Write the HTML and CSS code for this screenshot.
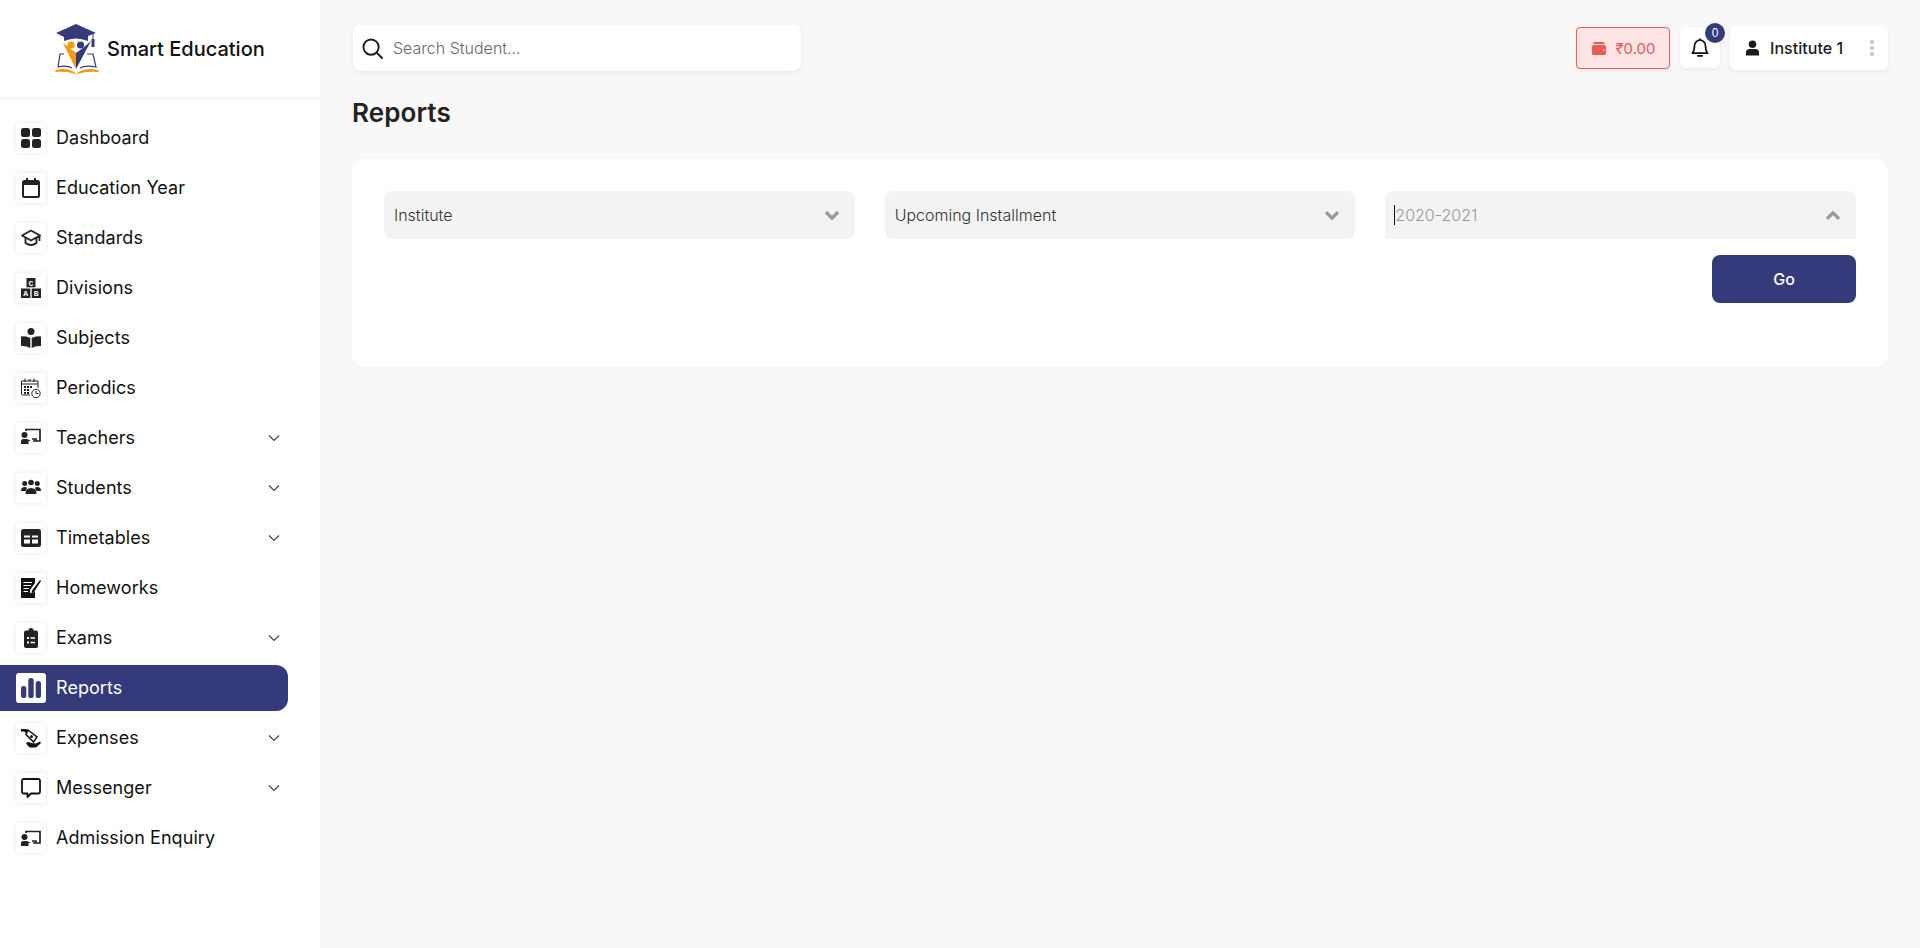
FILE: index.html
```html
<!DOCTYPE html>
<html lang="en">
<head>
<meta charset="utf-8">
<title>Reports - Smart Education</title>
<link rel="stylesheet" href="styles.css">
</head>
<body>
<div class="app">
  <aside class="sidebar">
    <div class="brand">
      <svg class="logo" viewBox="0 0 44 50" width="44" height="50">
        <path fill="#343a7a" d="M21 0 41 9 33 12V17Q21 12 9 17V13L1 9Z"/>
        <path fill="none" stroke="#343a7a" stroke-width="1" d="M31 10 38 9V16"/>
        <rect x="36.500" y="15" width="3" height="8" fill="#343a7a"/>
        <path fill="#f39c12" d="M8 19 15 24 21 29V45Z"/>
        <path fill="#343a7a" d="M36 17 28 24 21 29V45Z"/>
        <circle cx="16" cy="21" r="3.600" fill="#f39c12"/>
        <circle cx="25.500" cy="21" r="3.600" fill="#343a7a"/>
        <path fill="none" stroke="#343a7a" stroke-width="1.200" d="M9 30H5L3 43Q12 41 17 44M32 30H38L41 43Q30 41 25 44"/>
        <path fill="#f39c12" d="M1 46Q12 43 21 49V50Q11 47 0 48ZM43 46Q31 43 22 49V50Q32 47 44 48Z"/>
      </svg>
      <span class="brand-name">Smart Education</span>
    </div>
    <nav class="nav">
      <a class="nav-item"><span class="nav-icon"><svg viewBox="0 0 20 20"><rect x="0" y="0" width="9" height="9" rx="2.500"/><rect x="11" y="0" width="9" height="9" rx="2.500"/><rect x="0" y="11" width="9" height="9" rx="2.500"/><rect x="11" y="11" width="9" height="9" rx="2.500"/></svg></span><span class="nav-label">Dashboard</span></a>
      <a class="nav-item"><span class="nav-icon"><svg viewBox="0 0 20 20"><path fill-rule="evenodd" d="M5 0h2v2h6V0h2v2h1.500A2.500 2.500 0 0 1 19 4.500v13a2.500 2.500 0 0 1-2.500 2.500h-13A2.500 2.500 0 0 1 1 17.500v-13A2.500 2.500 0 0 1 3.500 2H5ZM3 7v10.500a.5.5 0 0 0 .5.5h13a.5.5 0 0 0 .5-.5V7Z"/></svg></span><span class="nav-label">Education Year</span></a>
      <a class="nav-item"><span class="nav-icon"><svg viewBox="0 0 20 20"><path fill="none" stroke="#222" stroke-width="1.800" stroke-linejoin="round" d="M10 2.500 19 7.500 10 12.500 1 7.500ZM4.500 10v5Q10 19 15.500 15v-5M18.500 8v5"/></svg></span><span class="nav-label">Standards</span></a>
      <a class="nav-item"><span class="nav-icon"><svg viewBox="0 0 20 20"><rect x="5.500" y="0" width="9" height="9.300"/><rect x="0" y="10.500" width="9.300" height="9.500"/><rect x="10.700" y="10.500" width="9.300" height="9.500"/><text class="blk" x="10" y="7.500">C</text><text class="blk" x="4.700" y="18">A</text><text class="blk" x="15.300" y="18">B</text></svg></span><span class="nav-label">Divisions</span></a>
      <a class="nav-item"><span class="nav-icon"><svg viewBox="0 0 20 20"><circle cx="10" cy="3.500" r="3.500"/><path d="M0 8.500Q5 7.500 9.300 10V20Q5 17.500 0 18ZM20 8.500Q15 7.500 10.700 10V20Q15 17.500 20 18Z"/></svg></span><span class="nav-label">Subjects</span></a>
      <a class="nav-item"><span class="nav-icon"><svg viewBox="0 0 20 20"><g fill="none" stroke="#222" stroke-width="1"><path d="M9 17H1.500A1 1 0 0 1 .5 16V3H17V10M.5 6H17M4 .5V4M13 .5V4M7 2H10"/><path stroke-dasharray="2 1" stroke-width="2" d="M3 9H12M3 12H9M3 15H8"/><circle cx="15" cy="15.500" r="4.200"/><path d="M15 13V15.500H17.500"/></g></svg></span><span class="nav-label">Periodics</span></a>
      <a class="nav-item"><span class="nav-icon"><svg viewBox="0 0 20 20"><circle cx="3.500" cy="7" r="3"/><path d="M0 16V13.500Q0 11 2.500 11H6L10 13H7.500V16Z"/><path fill="none" stroke="#222" stroke-width="1.700" d="M5 3V1.500H19V13H12M15 13V11H11"/></svg></span><span class="nav-label">Teachers</span><svg class="chev" viewBox="0 0 12 8"><path d="M1 1.500 6 6.500 11 1.500"/></svg></a>
      <a class="nav-item"><span class="nav-icon"><svg viewBox="0 0 20 20"><circle cx="3.700" cy="5.500" r="2.500"/><circle cx="16.300" cy="5.500" r="2.500"/><circle cx="10" cy="4.500" r="2.800"/><path d="M0 12.500Q0 9 3.700 9 5.500 9 6.300 10 5 11 5 13H0ZM20 12.500Q20 9 16.300 9 14.500 9 13.700 10 15 11 15 13H20ZM4.500 16Q4.500 10 10 10 15.500 10 15.500 16Z"/></svg></span><span class="nav-label">Students</span><svg class="chev" viewBox="0 0 12 8"><path d="M1 1.500 6 6.500 11 1.500"/></svg></a>
      <a class="nav-item"><span class="nav-icon"><svg viewBox="0 0 20 20"><path fill-rule="evenodd" d="M2.500 1h15A2.500 2.500 0 0 1 20 3.500v13a2.500 2.500 0 0 1-2.500 2.500h-15A2.500 2.500 0 0 1 0 16.500v-13A2.500 2.500 0 0 1 2.500 1ZM3 7.500V9.500H9V7.500ZM11 7.500V9.500H17V7.500ZM3 11.500V15.500H9V11.500ZM11 11.500V15.500H17V11.500Z"/></svg></span><span class="nav-label">Timetables</span><svg class="chev" viewBox="0 0 12 8"><path d="M1 1.500 6 6.500 11 1.500"/></svg></a>
      <a class="nav-item"><span class="nav-icon"><svg viewBox="0 0 20 20"><path fill="#111" fill-rule="evenodd" d="M0 0H14V5L9 12V15H12L14 13V20H0ZM2.500 4V5H11V4ZM2.500 7V8H10V7ZM2.500 10V11H8V10ZM2.500 13V14H7V13Z"/><path fill="#111" d="M19 2 20 3 13 14 10.500 15.500 11 12.500Z"/></svg></span><span class="nav-label">Homeworks</span></a>
      <a class="nav-item"><span class="nav-icon"><svg viewBox="0 0 20 20"><path fill="#222" fill-rule="evenodd" d="M7.500 2.500a2.500 2.500 0 0 1 5 0H15a2 2 0 0 1 2 2V18a2 2 0 0 1-2 2H5a2 2 0 0 1-2-2V4.500a2 2 0 0 1 2-2ZM6 9V11H8V9ZM6 13.500V15.500H8V13.500ZM9.500 9.300V10.700H14V9.300ZM9.500 13.800V15.200H14V13.800Z"/></svg></span><span class="nav-label">Exams</span><svg class="chev" viewBox="0 0 12 8"><path d="M1 1.500 6 6.500 11 1.500"/></svg></a>
      <a class="nav-item active"><span class="nav-icon"><svg viewBox="0 0 20 20"><rect x="0" y="8" width="5.300" height="12" rx="2.600"/><rect x="7.300" y="0" width="5.400" height="20" rx="2.600"/><rect x="14.700" y="3" width="5.300" height="17" rx="2.600"/></svg></span><span class="nav-label">Reports</span></a>
      <a class="nav-item"><span class="nav-icon"><svg viewBox="0 0 20 20"><path fill="#111" d="M0 1H5L7 2 5 5 3 3.500H0Z"/><path fill="none" stroke="#111" stroke-width="1.500" d="M7 2 16 9 12.500 14 5 6.500Z"/><circle cx="10.500" cy="8.500" r="1.500" fill="#111"/><path fill="#111" d="M5 15Q8 13 10 15L15 15.500 19 13.500 20 15 15 19.500H9L7 18Z"/></svg></span><span class="nav-label">Expenses</span><svg class="chev" viewBox="0 0 12 8"><path d="M1 1.500 6 6.500 11 1.500"/></svg></a>
      <a class="nav-item"><span class="nav-icon"><svg viewBox="0 0 20 20"><path fill="none" stroke="#111" stroke-width="1.800" stroke-linejoin="round" d="M2.500 1H17.500A1.600 1.600 0 0 1 19 2.500V14A1.600 1.600 0 0 1 17.500 15.500H10L6.500 19V15.500H2.500A1.600 1.600 0 0 1 1 14V2.500A1.600 1.600 0 0 1 2.500 1Z"/></svg></span><span class="nav-label">Messenger</span><svg class="chev" viewBox="0 0 12 8"><path d="M1 1.500 6 6.500 11 1.500"/></svg></a>
      <a class="nav-item"><span class="nav-icon"><svg viewBox="0 0 20 20"><circle cx="3.500" cy="9" r="3"/><path d="M0 18V15.500Q0 13 2.500 13H6L10 15H7.500V18Z"/><path fill="none" stroke="#222" stroke-width="1.700" d="M5 5V3.500H19V15H12M15 15V13H11"/></svg></span><span class="nav-label">Admission Enquiry</span></a>
    </nav>
  </aside>
  <main class="main">
    <header class="topbar">
      <label class="search">
        <svg viewBox="0 0 22 22" class="search-icon"><circle cx="9.500" cy="9.500" r="8"/><path d="M15.300 15.300 21 21"/></svg>
        <input class="search-input" type="text" placeholder="Search Student...">
      </label>
      <div class="top-actions">
        <button class="wallet" type="button">
          <svg viewBox="0 0 14 13" class="wallet-icon"><path fill-rule="evenodd" d="M2 0H11.500A1 1 0 0 1 12.500 1V2H1.500A1.500 1.500 0 0 1 2 0ZM1.500 3H12.500A1.500 1.500 0 0 1 14 4.500V11.500A1.500 1.500 0 0 1 12.500 13H1.500A1.500 1.500 0 0 1 0 11.500V4.500A1.500 1.500 0 0 1 1.500 3ZM11 7.500V8.800H12.500V7.500Z"/></svg>
          <span>₹0.00</span>
        </button>
        <button class="bell" type="button">
          <svg viewBox="0 0 18 20" class="bell-icon"><path d="M9 1V2.200M9 2.200A5.500 5.500 0 0 0 3.500 7.700C3.500 12 2.800 13.500 1.300 15.200H16.700C15.200 13.500 14.500 12 14.500 7.700A5.500 5.500 0 0 0 9 2.200Z"/><path d="M6.800 17.800H11.200"/></svg>
          <span class="badge">0</span>
        </button>
        <div class="user">
          <svg viewBox="0 0 16 16" class="user-icon"><circle cx="8" cy="4" r="4"/><path d="M1 16V13Q1 9 5 9H11Q15 9 15 13V16Z"/></svg>
          <span class="user-name">Institute 1</span>
          <span class="dots"><i></i><i></i><i></i></span>
        </div>
      </div>
    </header>
    <h1 class="title">Reports</h1>
    <section class="card">
      <div class="filters">
        <div class="select"><span class="val">Institute</span><svg class="caret" viewBox="0 0 14 10"><path d="M1.500 2 7 7.500 12.500 2"/></svg></div>
        <div class="select"><span class="val">Upcoming Installment</span><svg class="caret" viewBox="0 0 14 10"><path d="M1.500 2 7 7.500 12.500 2"/></svg></div>
        <div class="select open"><span class="cursor"></span><span class="val">2020-2021</span><svg class="caret" viewBox="0 0 14 10"><path d="M1.500 8 7 2.500 12.500 8"/></svg></div>
      </div>
      <div class="actions"><button class="go" type="button">Go</button></div>
    </section>
  </main>
</div>
</body>
</html>
```

FILE: styles.css
```css
* { box-sizing: border-box; }
html, body { margin: 0; height: 100%; }
body { font-family: Inter, "Noto Sans", sans-serif; background: #f8f8f8; color: #1c1c1c; overflow: hidden; }
.app { display: flex; height: 948px; }

.sidebar { width: 320px; flex: none; background: #fff; }
.brand { height: 99px; display: flex; align-items: center; padding: 0 0 0 55px; gap: 8px; border-bottom: 1px solid #f1f1f1; }
.logo { display: block; flex: none; margin-top: -1px; }
.brand-name { font-size: 20px; font-weight: 500; color: #111; }

.nav { display: flex; flex-direction: column; gap: 4px; padding: 16px 32px 0 0; }
.nav-item { height: 46px; display: flex; align-items: center; padding: 0 16px; gap: 10px; font-size: 18px; letter-spacing: .06px; color: #111; font-weight: 400; }
.nav-icon { width: 30px; height: 30px; flex: none; background: #fff; border-radius: 3px; box-shadow: 0 0 4px rgba(0,0,0,.1); display: flex; align-items: center; justify-content: center; }
.nav-icon svg { width: 20px; height: 20px; fill: #222; display: block; }
.nav-label { flex: 1; padding-bottom: 2px; }
.chev { width: 12px; height: 8px; fill: none; stroke: #444; stroke-width: 1.2; margin-right: -8px; }
.blk { font-family: "Liberation Mono", monospace; font-size: 8px; font-weight: 700; fill: #fff; text-anchor: middle; }
.nav-item.active { background: #343a7a; color: #fff; border-radius: 0 12px 12px 0; }
.nav-item.active .nav-icon { box-shadow: none; }
.nav-item.active .nav-icon svg { fill: #343a7a; }

.main { flex: 1; padding: 25px 32px 0 32px; min-width: 0; }
.topbar { display: flex; justify-content: space-between; align-items: center; height: 46px; }
.search { width: 448px; height: 46px; margin-left: 1px; background: #fff; border-radius: 8px; box-shadow: 0 2px 5px rgba(0,0,0,.07); display: flex; align-items: center; padding: 0 9px; gap: 10px; }
.search-icon { width: 21px; height: 21px; flex: none; fill: none; stroke: #1c1c1c; stroke-width: 2; stroke-linecap: round; }
.search-input { flex: 1; border: 0; outline: 0; background: transparent; font: 300 16px Inter, sans-serif; color: #333; padding: 0; }
.search-input::placeholder { color: #666; opacity: 1; }

.top-actions { display: flex; align-items: center; gap: 10px; }
.wallet { width: 94px; height: 42px; border: 1px solid #e8605a; border-radius: 4px; background: #fee4e4; color: #ea5b55; font: 400 15px Inter, sans-serif; display: flex; align-items: center; justify-content: center; gap: 9px; padding: 0 0 0 2px; box-shadow: 0 2px 4px rgba(0,0,0,.05); }
.wallet-icon { width: 14px; height: 13px; fill: #ea5b55; display: block; }
.bell { position: relative; width: 40px; height: 40px; border: 0; padding: 0; background: #fff; border-radius: 6px; box-shadow: 0 2px 5px rgba(0,0,0,.06); display: flex; align-items: center; justify-content: center; }
.bell-icon { width: 18px; height: 20px; fill: none; stroke: #111; stroke-width: 1.700; stroke-linecap: round; stroke-linejoin: round; display: block; }
.badge { position: absolute; top: -5px; right: -5px; width: 20px; height: 20px; border-radius: 50%; background: #343a7a; color: #fff; font-size: 12px; line-height: 20px; text-align: center; }
.user { width: 158px; height: 44px; background: #fff; border-radius: 6px; box-shadow: 0 2px 5px rgba(0,0,0,.06); display: flex; align-items: center; padding: 0 14px 0 15px; }
.user-icon { width: 15px; height: 16px; fill: #1c1c1c; flex: none; }
.user-name { flex: 1; margin-left: 10px; font-size: 16px; font-weight: 500; letter-spacing: .05px; color: #1c1c1c; }
.dots { display: flex; flex-direction: column; gap: 2px; }
.dots i { width: 4px; height: 4px; border-radius: 50%; background: #c4c4c4; display: block; }

.title { margin: 25px 0 0; font-size: 26px; line-height: 34px; font-weight: 600; letter-spacing: .1px; color: #222; }

.card { margin-top: 29px; height: 208px; background: #fff; border-radius: 12px; padding: 32px; box-shadow: 0 1px 4px rgba(0,0,0,.03); }
.filters { display: grid; grid-template-columns: repeat(3, 1fr); gap: 30px; }
.select { height: 48px; background: #f3f3f3; border-radius: 8px; display: flex; align-items: center; padding: 0 15px 0 10px; font-size: 16px; font-weight: 300; color: #333; position: relative; }
.select .val { flex: 1; }
.select.open { border-radius: 8px 8px 0 0; color: #999; }
.cursor { position: absolute; left: 9px; top: 14px; width: 1px; height: 20px; background: #111; }
.caret { width: 16px; height: 11px; fill: none; stroke: #999; stroke-width: 3; flex: none; }
.actions { display: flex; justify-content: flex-end; margin-top: 16px; }
.go { width: 144px; height: 48px; border: 0; border-radius: 8px; background: #343a7a; color: #fff; font: 500 16px Inter, sans-serif; }
```
